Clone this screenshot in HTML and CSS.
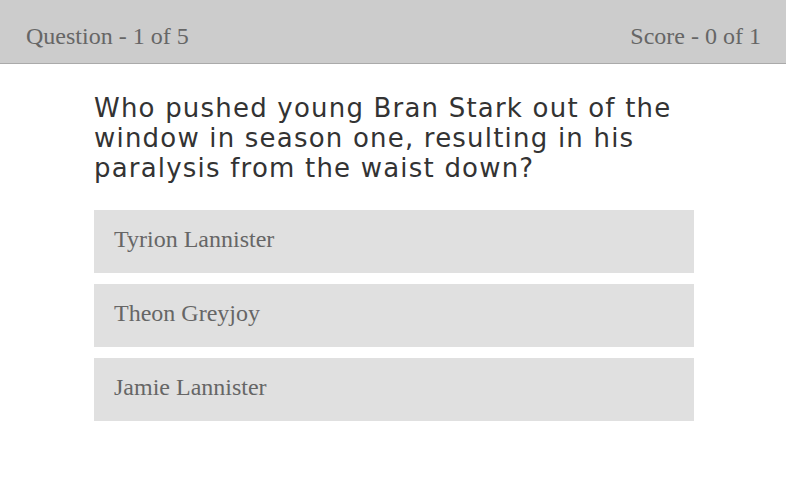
FILE: index.html
```html
<!DOCTYPE html>
<html>
<head>
<meta charset="utf-8">
<link rel="stylesheet" href="styles.css">
</head>
<body>
<header class="bar">
  <span class="bar-text">Question - 1 of 5</span>
  <span class="bar-text">Score - 0 of 1</span>
</header>
<main class="quiz">
  <h1 class="question">Who pushed young Bran Stark out of the window in season one, resulting in his paralysis from the waist down?</h1>
  <ul class="options">
    <li class="option">Tyrion Lannister</li>
    <li class="option">Theon Greyjoy</li>
    <li class="option">Jamie Lannister</li>
  </ul>
</main>
</body>
</html>
```

FILE: styles.css
```css
html, body {
  margin: 0;
  padding: 0;
  background: #fff;
}
.bar {
  display: flex;
  justify-content: space-between;
  align-items: center;
  height: 63px;
  padding: 0 25px 0 26px;
  background: #cccccc;
  border-bottom: 1px solid #aaaaaa;
  box-sizing: content-box;
}
.bar-text {
  font-family: "Liberation Serif", serif;
  font-size: 24px;
  color: #666;
  padding-top: 9px;
}
.quiz {
  width: 600px;
  margin-left: calc(50% - 299px);
}
.question {
  font-family: "DejaVu Sans", "Liberation Sans", sans-serif;
  font-weight: normal;
  font-size: 26px;
  line-height: 30px;
  letter-spacing: 1.2px;
  color: #333;
  margin: 29px 0 27px;
}
.options {
  list-style: none;
  margin: 0;
  padding: 0;
  display: flex;
  flex-direction: column;
  gap: 11px;
}
.option {
  background: #e0e0e0;
  height: 63px;
  box-sizing: border-box;
  display: flex;
  align-items: center;
  padding: 0 20px 4px;
  font-family: "Liberation Serif", serif;
  font-size: 24px;
  color: #666;
}
```
